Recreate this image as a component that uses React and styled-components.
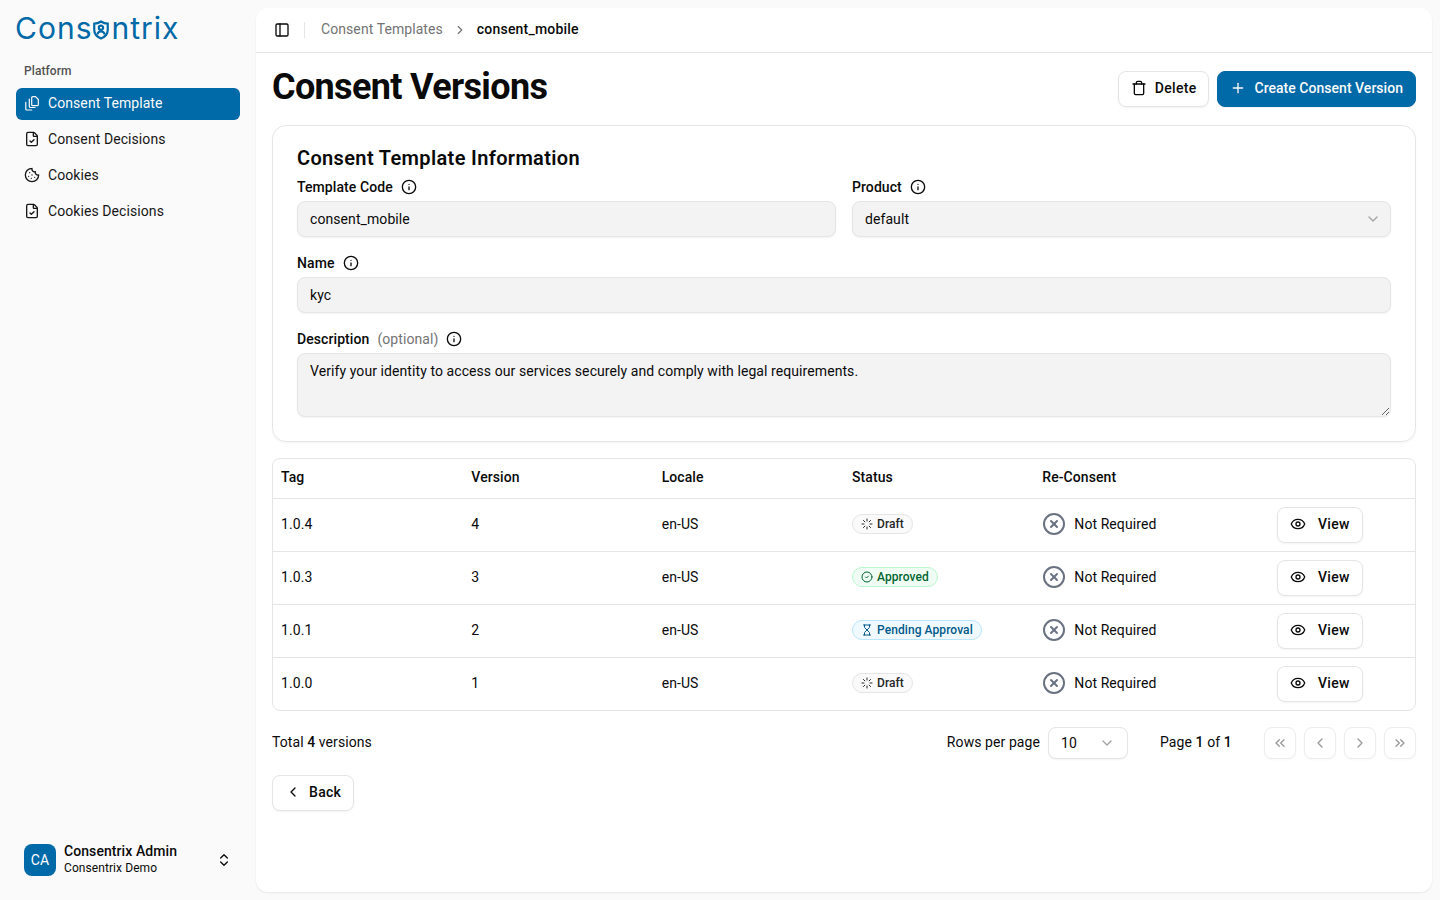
import React from "react";
import styled, { createGlobalStyle } from "styled-components";
import {
  PanelLeft, ChevronRight, ChevronLeft, ChevronDown, ChevronsLeft, ChevronsRight, ChevronsUpDown,
  Info, Trash, Plus, Eye, CircleX, CircleCheck, Hourglass, Loader, Cookie, FileCheck,
} from "lucide-react";

const BLUE = "#0069a8";
const FONT = `Roboto, "Noto Sans", "Liberation Sans", sans-serif`;

const GlobalStyle = createGlobalStyle`
  * { box-sizing: border-box; }
  html, body { margin: 0; padding: 0; height: 100%; }
  body { background: #fafafa; font-family: ${FONT}; color: #0a0a0a; font-size: 14px; letter-spacing: 0.08px; }
`;

const Layout = styled.div`
  display: flex;
  width: 1440px;
  height: 900px;
  overflow: hidden;
  background: #fafafa;
`;

const Sidebar = styled.aside`
  display: flex;
  flex-direction: column;
  width: 256px;
  flex: none;
  padding: 8px 16px 16px;
`;

const Logo = styled.div`
  display: flex;
  align-items: center;
  height: 40px;
  margin-left: -1px;
  font-family: Inter, sans-serif;
  font-weight: 400;
  font-size: 30px;
  letter-spacing: 1px;
  color: ${BLUE};
  line-height: 40px;
`;

const GroupLabel = styled.div`
  margin: 14px 8px 0;
  height: 18px;
  line-height: 18px;
  font-size: 12px;
  font-weight: 500;
  color: #525252;
`;

const Nav = styled.nav`
  display: flex;
  flex-direction: column;
  gap: 4px;
  margin-top: 8px;
`;

const NavItem = styled.a`
  display: flex;
  align-items: center;
  gap: 8px;
  height: 32px;
  padding: 0 8px 2px;
  border-radius: 6px;
  font-size: 14px;
  color: ${(p) => (p.$active ? "#fafafa" : "#171717")};
  background: ${(p) => (p.$active ? BLUE : "transparent")};
  svg { width: 16px; height: 16px; flex: none; }
`;

const UserRow = styled.div`
  display: flex;
  align-items: center;
  margin: auto 8px 0;
  height: 48px;
`;

const Avatar = styled.div`
  width: 32px;
  height: 32px;
  border-radius: 8px;
  background: ${BLUE};
  color: #fff;
  font-size: 14px;
  display: flex;
  align-items: center;
  justify-content: center;
  flex: none;
`;

const UserText = styled.div`
  display: flex;
  flex-direction: column;
  margin-left: 8px;
  padding-bottom: 2px;
  flex: 1;
  line-height: 16px;
`;

const UserName = styled.span`
  font-size: 14px;
  font-weight: 500;
  line-height: 18px;
`;

const UserOrg = styled.span`
  font-size: 12px;
`;

const Main = styled.main`
  flex: 1;
  margin: 8px 8px 8px 0;
  background: #fff;
  border-radius: 12px;
  box-shadow: 0 1px 2px rgba(0, 0, 0, 0.08);
  display: flex;
  flex-direction: column;
`;

const TopBar = styled.header`
  display: flex;
  align-items: center;
  height: 45px;
  padding: 0 18px;
  border-bottom: 1px solid #e5e5e5;
  flex: none;
`;

const Divider = styled.span`
  width: 1px;
  height: 16px;
  background: #e5e5e5;
  margin: 0 16px 0 14px;
`;

const Crumb = styled.span`
  padding-bottom: 2px;
  font-size: 14px;
  color: ${(p) => (p.$current ? "#0a0a0a" : "#737373")};
  font-weight: ${(p) => (p.$current ? 500 : 400)};
  letter-spacing: ${(p) => (p.$current ? "0.2px" : "0.08px")};
`;

const CrumbSep = styled.span`
  display: flex;
  margin: 0 10px;
  color: #737373;
`;

const Content = styled.div`
  display: flex;
  flex-direction: column;
  padding: 18px 16px 0;
`;

const TitleRow = styled.div`
  display: flex;
  align-items: center;
  justify-content: space-between;
  height: 36px;
`;

const Title = styled.h1`
  margin: 0;
  padding-bottom: 4px;
  font-size: 36px;
  line-height: 36px;
  font-weight: 700;
  letter-spacing: -0.65px;
`;

const Actions = styled.div`
  display: flex;
  gap: 8px;
`;

const Button = styled.button`
  display: inline-flex;
  align-items: center;
  justify-content: center;
  gap: ${(p) => (p.$wideGap ? "12px" : "8px")};
  height: 36px;
  padding: 0 12px 2px;
  border-radius: 8px;
  font-family: ${FONT};
  font-size: 14px;
  font-weight: 500;
  letter-spacing: ${(p) => (p.$primary ? "0.03px" : "0.3px")};
  border: 1px solid ${(p) => (p.$primary ? BLUE : "#e5e5e5")};
  background: ${(p) => (p.$primary ? BLUE : "#fff")};
  color: ${(p) => (p.$primary ? "#fafafa" : "#0a0a0a")};
  box-shadow: 0 1px 2px rgba(0, 0, 0, 0.05);
  svg { width: 16px; height: 16px; flex: none; }
`;

const Card = styled.section`
  margin-top: 18px;
  height: 317px;
  padding: 20px 24px 0;
  border: 1px solid #e5e5e5;
  border-radius: 14px;
  box-shadow: 0 1px 2px rgba(0, 0, 0, 0.05);
`;

const CardTitle = styled.h2`
  margin: 0;
  font-size: 20px;
  line-height: 24px;
  font-weight: 600;
  letter-spacing: 0.35px;
`;

const FormGrid = styled.div`
  display: grid;
  grid-template-columns: 1fr 1fr;
  gap: 16px;
  margin-top: 7px;
`;

const Field = styled.div`
  display: flex;
  flex-direction: column;
  gap: 4px;
  grid-column: ${(p) => (p.$wide ? "1 / -1" : "auto")};
`;

const Label = styled.label`
  display: flex;
  align-items: center;
  gap: 8px;
  height: 20px;
  font-size: 14px;
  font-weight: 500;
  svg { width: 16px; height: 16px; }
`;

const Optional = styled.span`
  font-weight: 400;
  color: #737373;
`;

const TextInput = styled.input`
  height: 36px;
  width: 100%;
  padding: 0 12px;
  border: 1px solid #e5e5e5;
  border-radius: 8px;
  background: #f3f3f3;
  font-family: ${FONT};
  font-size: 14px;
  letter-spacing: 0.08px;
  color: #0a0a0a;
  box-shadow: 0 1px 2px rgba(0, 0, 0, 0.05);
  outline: none;
`;

const TextArea = styled.textarea`
  height: 64px;
  width: 100%;
  padding: 7px 12px;
  border: 1px solid #e5e5e5;
  border-radius: 8px;
  background: #f3f3f3;
  font-family: ${FONT};
  font-size: 14px;
  letter-spacing: 0.08px;
  line-height: 20px;
  color: #0a0a0a;
  box-shadow: 0 1px 2px rgba(0, 0, 0, 0.05);
  outline: none;
  display: block;
`;

const SelectBox = styled.div`
  display: flex;
  align-items: center;
  justify-content: space-between;
  width: ${(p) => (p.$plain ? "80px" : "auto")};
  height: ${(p) => (p.$plain ? "32px" : "36px")};
  padding: 0 ${(p) => (p.$plain ? "12px" : "9px")} 0 12px;
  border: 1px solid #e5e5e5;
  border-radius: 8px;
  background: ${(p) => (p.$plain ? "#fff" : "#f3f3f3")};
  font-size: 14px;
  box-shadow: 0 1px 2px rgba(0, 0, 0, 0.05);
  svg { width: 16px; height: 16px; color: #a3a3a3; }
`;

const TableWrap = styled.div`
  margin-top: 16px;
  border: 1px solid #e5e5e5;
  border-radius: 8px;
  overflow: hidden;
`;

const Table = styled.table`
  width: 100%;
  border-collapse: collapse;
  table-layout: fixed;
  font-size: 14px;
`;

const Th = styled.th`
  height: 39px;
  padding: 0 8px 2px;
  text-align: left;
  font-weight: 500;
  border-bottom: 1px solid #e5e5e5;
`;

const Td = styled.td`
  height: 53px;
  padding: 0 8px ${(p) => (p.$center ? "0" : "2px")};
  border-bottom: 1px solid #e5e5e5;
  text-align: ${(p) => (p.$center ? "center" : "left")};
  tr:last-child & { border-bottom: 0; }
`;

const badgeTones = {
  draft: { bg: "#fafafa", border: "#e5e5e5", color: "#262626" },
  approved: { bg: "#f0fdf4", border: "#b9f8cf", color: "#016630" },
  pending: { bg: "#f0f9ff", border: "#b8e6fe", color: "#00598a" },
};

const Badge = styled.span`
  display: inline-flex;
  align-items: center;
  gap: 4px;
  height: 20px;
  padding: 0 8px;
  border-radius: 999px;
  font-size: 12px;
  font-weight: 500;
  vertical-align: middle;
  background: ${(p) => badgeTones[p.$tone].bg};
  border: 1px solid ${(p) => badgeTones[p.$tone].border};
  color: ${(p) => badgeTones[p.$tone].color};
  svg { width: 12px; height: 12px; flex: none; }
`;

const ReConsent = styled.div`
  display: flex;
  align-items: center;
  gap: 8px;
  svg { width: 24px; height: 24px; color: #6a7282; flex: none; }
`;

const FooterRow = styled.div`
  display: flex;
  align-items: center;
  margin-top: 16px;
  height: 32px;
  font-size: 14px;
`;

const Total = styled.div`
  flex: 1;
  padding-bottom: 2px;
`;

const RowsLabel = styled.span`
  margin-right: 8px;
  padding-bottom: 2px;
`;

const PageInfo = styled.span`
  margin: 0 32px;
  padding-bottom: 2px;
  width: 72px;
  white-space: nowrap;
`;

const Strong = styled.b`
  font-weight: 500;
`;

const Pager = styled.div`
  display: flex;
  gap: 8px;
`;

const PageButton = styled.button`
  display: flex;
  align-items: center;
  justify-content: center;
  width: 32px;
  height: 32px;
  padding: 0;
  border: 1px solid #ededed;
  border-radius: 8px;
  background: #fff;
  color: #9a9a9a;
  box-shadow: 0 1px 2px rgba(0, 0, 0, 0.03);
  svg { width: 16px; height: 16px; }
`;

const BackRow = styled.div`
  margin-top: 16px;
`;

const rows = [
  { tag: "1.0.4", version: 4, tone: "draft", status: "Draft", Icon: Loader },
  { tag: "1.0.3", version: 3, tone: "approved", status: "Approved", Icon: CircleCheck },
  { tag: "1.0.1", version: 2, tone: "pending", status: "Pending Approval", Icon: Hourglass },
  { tag: "1.0.0", version: 1, tone: "draft", status: "Draft", Icon: Loader },
];

function LogoMark() {
  return (
    <svg width="18" height="22" viewBox="0 0 20 24" fill="none" stroke={BLUE} strokeWidth="2.4" style={{ margin: "4px 1px 0 0" }}>
      <path d="M10 2.5c3 1.8 5 2.3 7.5 2.5v7c0 4.5-3.2 7.7-7.5 9.5C5.7 19.7 2.5 16.5 2.5 12V5C5 4.8 7 4.3 10 2.5z" />
      <circle cx="10" cy="9.5" r="2.4" />
      <path d="M5.8 17c.8-2.4 2.3-3.4 4.2-3.4s3.4 1 4.2 3.4" />
    </svg>
  );
}

// stacked pages: front sheet with two L-shaped edges behind it
function TemplateIcon() {
  return (
    <svg viewBox="0 0 16 16" fill="none" stroke="currentColor" strokeWidth="1.2" strokeLinecap="round" strokeLinejoin="round">
      <path d="M8.7 1.7h2.8l2.8 2.8v5.2a1 1 0 0 1-1 1H8.7a1 1 0 0 1-1-1V2.7a1 1 0 0 1 1-1z" />
      <path d="M5.3 4.2v7.3a1 1 0 0 0 1 1H11" />
      <path d="M1.8 7.4v6.6a1 1 0 0 0 1 1h4.9" />
    </svg>
  );
}

export default function App() {
  return (
    <Layout>
      <GlobalStyle />
      <Sidebar>
        <Logo>Cons<LogoMark />ntrix</Logo>
        <GroupLabel>Platform</GroupLabel>
        <Nav>
          <NavItem $active><TemplateIcon />Consent Template</NavItem>
          <NavItem><FileCheck />Consent Decisions</NavItem>
          <NavItem><Cookie />Cookies</NavItem>
          <NavItem><FileCheck />Cookies Decisions</NavItem>
        </Nav>
        <UserRow>
          <Avatar>CA</Avatar>
          <UserText>
            <UserName>Consentrix Admin</UserName>
            <UserOrg>Consentrix Demo</UserOrg>
          </UserText>
          <ChevronsUpDown size={16} />
        </UserRow>
      </Sidebar>
      <Main>
        <TopBar>
          <PanelLeft size={16} />
          <Divider />
          <Crumb>Consent Templates</Crumb>
          <CrumbSep><ChevronRight size={14} /></CrumbSep>
          <Crumb $current>consent_mobile</Crumb>
        </TopBar>
        <Content>
          <TitleRow>
            <Title>Consent Versions</Title>
            <Actions>
              <Button><Trash />Delete</Button>
              <Button $primary><Plus />Create Consent Version</Button>
            </Actions>
          </TitleRow>
          <Card>
            <CardTitle>Consent Template Information</CardTitle>
            <FormGrid>
              <Field>
                <Label>Template Code <Info /></Label>
                <TextInput readOnly value="consent_mobile" />
              </Field>
              <Field>
                <Label>Product <Info /></Label>
                <SelectBox>default<ChevronDown /></SelectBox>
              </Field>
              <Field $wide>
                <Label>Name <Info /></Label>
                <TextInput readOnly value="kyc" />
              </Field>
              <Field $wide>
                <Label>Description <Optional>(optional)</Optional> <Info /></Label>
                <TextArea readOnly value="Verify your identity to access our services securely and comply with legal requirements." />
              </Field>
            </FormGrid>
          </Card>
          <TableWrap>
            <Table>
              <thead>
                <tr>
                  <Th>Tag</Th>
                  <Th>Version</Th>
                  <Th>Locale</Th>
                  <Th>Status</Th>
                  <Th>Re-Consent</Th>
                  <Th />
                </tr>
              </thead>
              <tbody>
                {rows.map((row) => (
                  <tr key={row.tag}>
                    <Td>{row.tag}</Td>
                    <Td>{row.version}</Td>
                    <Td>en-US</Td>
                    <Td><Badge $tone={row.tone}><row.Icon />{row.status}</Badge></Td>
                    <Td><ReConsent><CircleX />Not Required</ReConsent></Td>
                    <Td $center><Button $wideGap><Eye />View</Button></Td>
                  </tr>
                ))}
              </tbody>
            </Table>
          </TableWrap>
          <FooterRow>
            <Total>Total <Strong>4</Strong> versions</Total>
            <RowsLabel>Rows per page</RowsLabel>
            <SelectBox $plain>10<ChevronDown /></SelectBox>
            <PageInfo>Page <Strong>1</Strong> of <Strong>1</Strong></PageInfo>
            <Pager>
              <PageButton><ChevronsLeft /></PageButton>
              <PageButton><ChevronLeft /></PageButton>
              <PageButton><ChevronRight /></PageButton>
              <PageButton><ChevronsRight /></PageButton>
            </Pager>
          </FooterRow>
          <BackRow>
            <Button><ChevronLeft />Back</Button>
          </BackRow>
        </Content>
      </Main>
    </Layout>
  );
}
